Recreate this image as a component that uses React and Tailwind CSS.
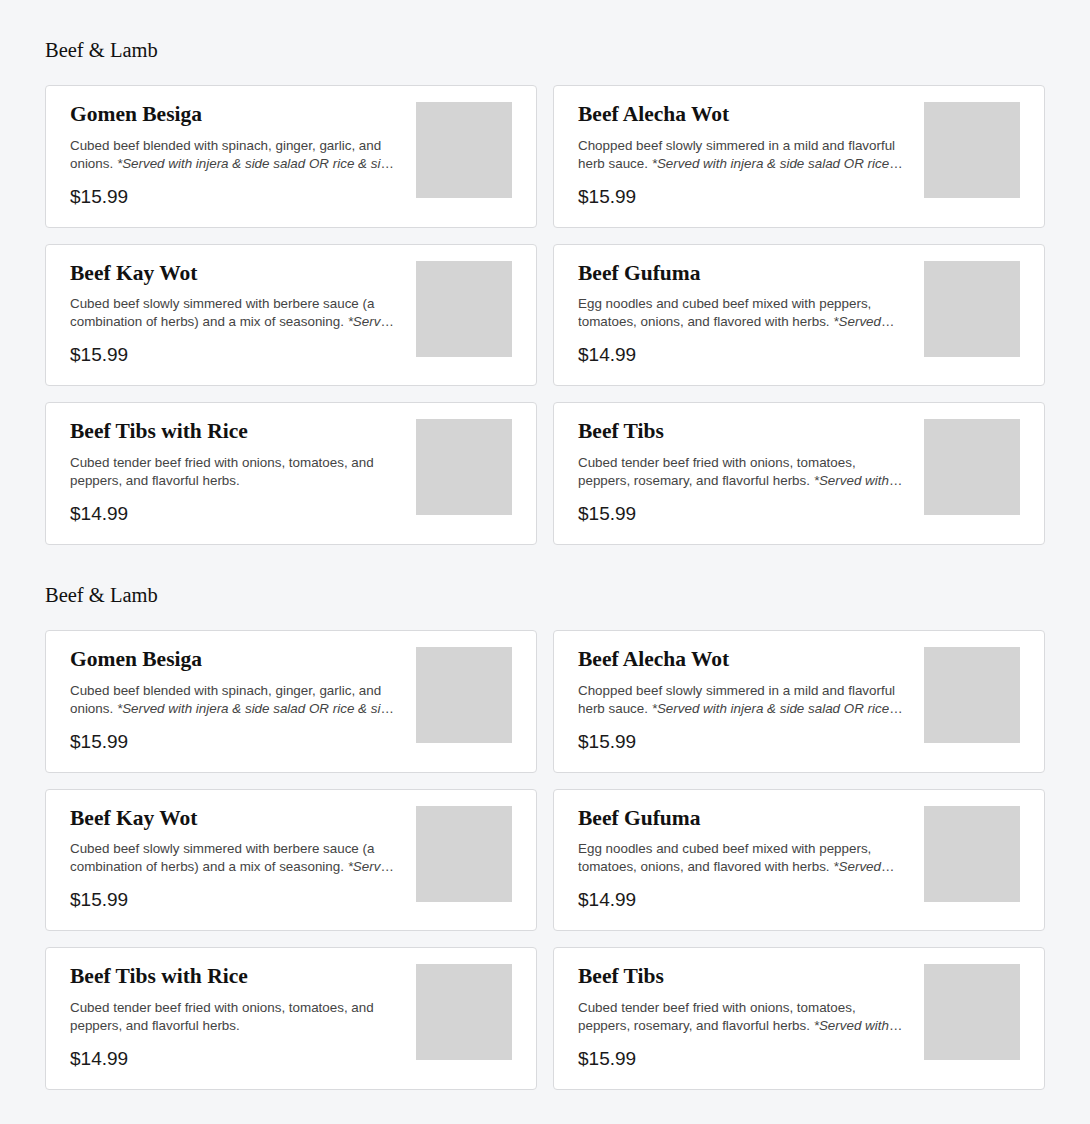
const items = [
  {
    name: "Gomen Besiga",
    desc: "Cubed beef blended with spinach, ginger, garlic, and onions.",
    note: "*Served with injera & side salad OR rice & side salad",
    price: "$15.99",
  },
  {
    name: "Beef Alecha Wot",
    desc: "Chopped beef slowly simmered in a mild and flavorful herb sauce.",
    note: "*Served with injera & side salad OR rice & side salad",
    price: "$15.99",
  },
  {
    name: "Beef Kay Wot",
    desc: "Cubed beef slowly simmered with berbere sauce (a combination of herbs) and a mix of seasoning.",
    note: "*Served with injera & side salad OR rice & side salad",
    price: "$15.99",
  },
  {
    name: "Beef Gufuma",
    desc: "Egg noodles and cubed beef mixed with peppers, tomatoes, onions, and flavored with herbs.",
    note: "*Served with injera & side salad OR rice & side salad",
    price: "$14.99",
  },
  {
    name: "Beef Tibs with Rice",
    desc: "Cubed tender beef fried with onions, tomatoes, and peppers, and flavorful herbs.",
    note: "",
    price: "$14.99",
  },
  {
    name: "Beef Tibs",
    desc: "Cubed tender beef fried with onions, tomatoes, peppers, rosemary, and flavorful herbs.",
    note: "*Served with injera & side salad OR rice & side salad",
    price: "$15.99",
  },
];

function MenuCard({ item }) {
  return (
    <div className="bg-white border border-[#d9dadd] rounded-[4px] px-6 py-4 flex gap-5">
      <div className="flex-1 min-w-0 flex flex-col">
        <h3 className="font-['Liberation_Serif',serif] font-bold text-[21.5px] leading-[24px] text-[#111]">
          {item.name}
        </h3>
        <p className="mt-[10.5px] font-['Liberation_Sans',sans-serif] text-[13.4px] leading-[18px] text-[#444] line-clamp-2">
          {item.desc}{" "}
          {item.note && <em className="italic">{item.note}</em>}
        </p>
        <div className="mt-[10px] font-['Liberation_Sans',sans-serif] text-[19px] leading-[28px] text-[#1a1a1a]">
          {item.price}
        </div>
      </div>
      <div className="w-24 h-24 shrink-0 bg-[#d4d4d4]" />
    </div>
  );
}

function Section() {
  return (
    <section>
      <h2 className="font-['Liberation_Serif',serif] text-[20.5px] leading-[28px] text-[#111]">
        Beef &amp; Lamb
      </h2>
      <div className="mt-[21px] grid grid-cols-2 gap-4">
        {items.map((item, i) => (
          <MenuCard key={i} item={item} />
        ))}
      </div>
    </section>
  );
}

export default function App() {
  return (
    <div className="min-h-screen bg-[#f5f6f8] px-[45px] pt-9 pb-[35px]">
      <div className="w-[1000px] flex flex-col gap-[36.5px]">
        <Section />
        <Section />
      </div>
    </div>
  );
}
